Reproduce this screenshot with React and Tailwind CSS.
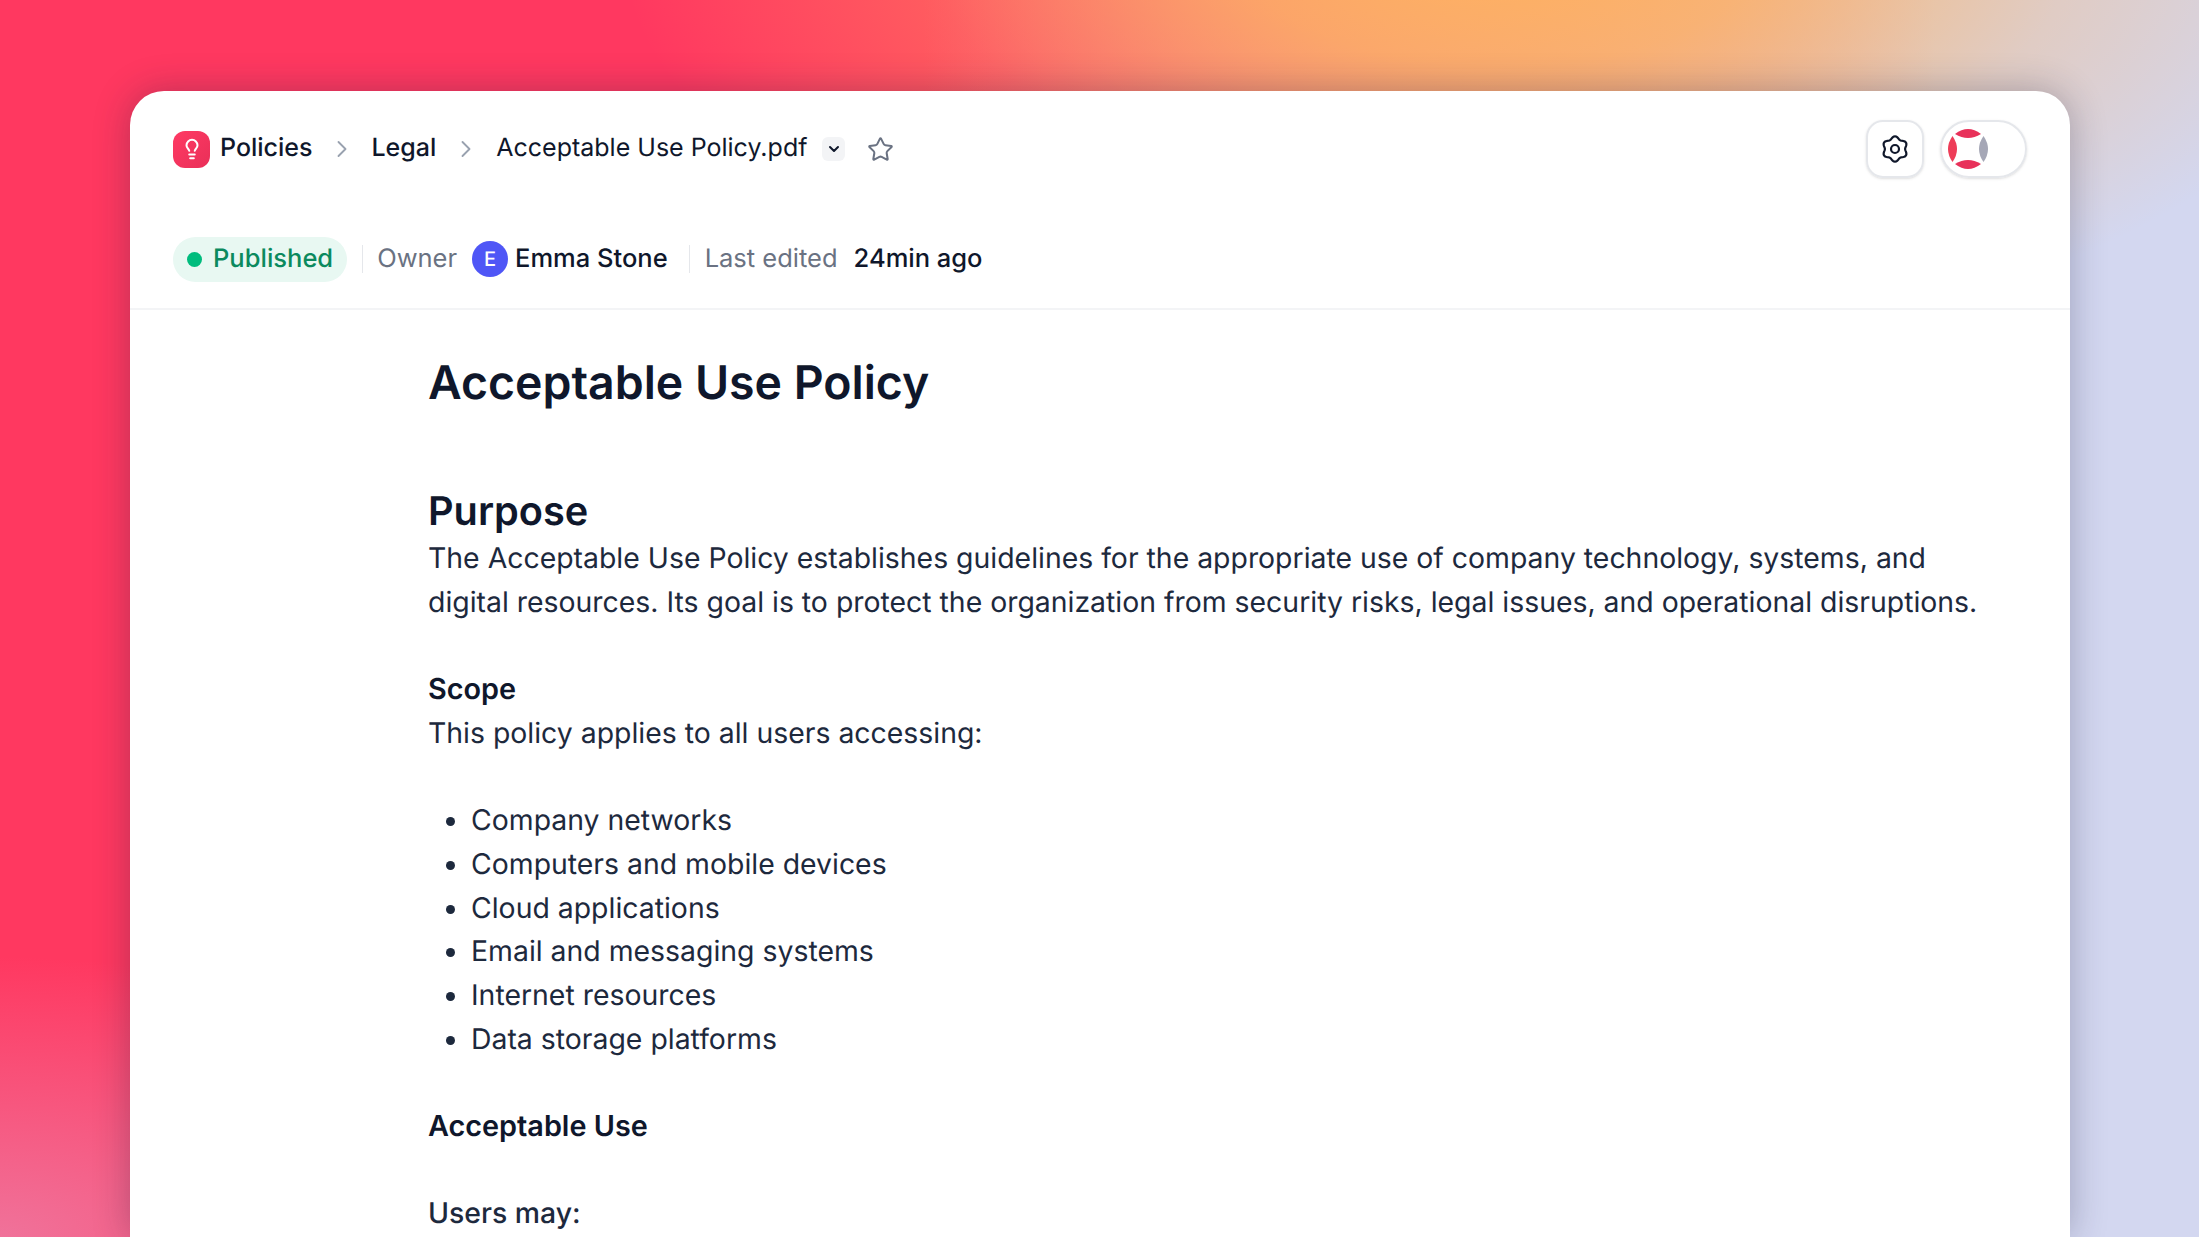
import React from 'react';
import { ChevronRight, ChevronDown, Star, Lightbulb } from 'lucide-react';

const bullets = [
  'Company networks',
  'Computers and mobile devices',
  'Cloud applications',
  'Email and messaging systems',
  'Internet resources',
  'Data storage platforms',
];

// six lobed outline of the settings cog
const gearPath = Array.from({ length: 72 }, (_, i) => {
  const a = (i / 72) * Math.PI * 2;
  const r = 11.4 + 1.3 * Math.cos(6 * a);
  const x = 15 + r * Math.sin(a);
  const y = 15 - r * Math.cos(a);
  return `${i === 0 ? 'M' : 'L'}${x.toFixed(2)} ${y.toFixed(2)}`;
}).join(' ') + 'Z';

const GearIcon = () => (
  <svg width="30" height="30" viewBox="0 0 30 30" fill="none" stroke="#0f172a" strokeWidth="2.2" strokeLinejoin="round">
    <path d={gearPath} />
    <circle cx="15" cy="15" r="4" />
  </svg>
);

const HelpIcon = () => (
  <svg width="40" height="40" viewBox="0 0 40 40">
    <path d="M7 5 Q20 -5 33 5 Q20 13 7 5Z" fill="#e8315a" />
    <path d="M7 35 Q20 45 33 35 Q20 27 7 35Z" fill="#e8315a" />
    <path d="M4.500 7 Q-4.500 20 4.500 33 Q13.500 20 4.500 7Z" fill="#ee3d58" />
    <path d="M35.500 7 Q44.500 20 35.500 33 Q26.500 20 35.500 7Z" fill="#a5a7b6" />
  </svg>
);

const Divider = () => <div className="w-px h-7 bg-gray-200" />;

export default function App() {
  return (
    <div className="h-screen overflow-hidden flex flex-col pt-[91px] pl-[130px] pr-[129px] font-['Inter',sans-serif] [text-rendering:geometricPrecision] bg-[radial-gradient(ellipse_800px_400px_at_0%_100%,#f0729a_0%,rgba(240,114,154,0)_70%),radial-gradient(ellipse_880px_420px_at_1500px_-60px,#ffb25e_0%,rgba(255,178,94,0.8)_30%,rgba(255,178,94,0.3)_65%,rgba(255,178,94,0)_100%),linear-gradient(90deg,#ff3860_0%,#ff3860_42%,#d3d7f0_88%,#d3d7f0_100%)]">
      <div className="flex-1 bg-white rounded-t-[34px] shadow-[0_0_36px_rgba(30,30,60,0.3)]">
        {/* Breadcrumb */}
        <div className="flex items-center justify-between pl-[43px] pr-[43px] h-[116px]">
          <div className="flex items-center text-[25px] text-slate-900">
            <div className="w-[37px] h-[37px] rounded-[12px] bg-gradient-to-br from-[#ff3a64] to-[#e92f58] flex items-center justify-center">
              <Lightbulb className="w-[22px] h-[22px] text-white" strokeWidth={2.200} />
            </div>
            <span className="ml-[10px] font-medium">Policies</span>
            <ChevronRight className="w-[28px] h-[28px] text-gray-400 mx-[15.500px]" strokeWidth={1.600} />
            <span className="font-medium">Legal</span>
            <ChevronRight className="w-[28px] h-[28px] text-gray-400 mx-[16px]" strokeWidth={1.600} />
            <span>Acceptable Use Policy.pdf</span>
            <div className="ml-[15px] w-[23px] h-[24px] rounded-md bg-gray-100 flex items-center justify-center">
              <ChevronDown className="w-[16px] h-[16px] text-slate-900" strokeWidth={3} />
            </div>
            <Star className="ml-[22px] w-[27px] h-[27px] text-gray-500" strokeWidth={1.800} />
          </div>
          <div className="flex items-center gap-[16px]">
            <div className="w-[58px] h-[58px] rounded-[17px] border-2 border-gray-200 shadow-sm flex items-center justify-center">
              <GearIcon />
            </div>
            <div className="w-[87px] h-[58px] rounded-full border-2 border-gray-200 shadow-sm flex items-center pl-[6px]">
              <HelpIcon />
            </div>
          </div>
        </div>

        {/* Status row */}
        <div className="flex items-center h-[103px] pl-[43px] pt-[3px] border-b-2 border-gray-100 text-[25.500px]">
          <div className="h-[45px] px-[14px] rounded-full bg-[#e8f8f2] flex items-center gap-[11px]">
            <div className="w-[15px] h-[15px] rounded-full bg-emerald-500" />
            <span className="font-medium text-[#0b8a5e]">Published</span>
          </div>
          <div className="ml-[15px] mr-[14px]"><Divider /></div>
          <span className="text-gray-500">Owner</span>
          <div className="ml-[15px] w-[36px] h-[36px] rounded-full bg-[#4f56f6] flex items-center justify-center text-white text-[20px] font-medium">E</div>
          <span className="ml-[7px] font-medium text-slate-900">Emma Stone</span>
          <div className="ml-[21px] mr-[15px]"><Divider /></div>
          <span className="text-gray-500">Last edited</span>
          <span className="ml-[16px] font-medium text-slate-900">24min ago</span>
        </div>

        {/* Document */}
        <div className="pl-[298px] pr-[60px] text-[28.400px] leading-[43.700px] text-slate-800">
          <h1 className="mt-[45px] text-[46.400px] leading-[56px] font-semibold text-slate-900">Acceptable Use Policy</h1>
          <h2 className="mt-[76px] text-[39.700px] leading-[49px] font-semibold text-slate-900">Purpose</h2>
          <p>The Acceptable Use Policy establishes guidelines for the appropriate use of company technology, systems, and digital resources. Its goal is to protect the organization from security risks, legal issues, and operational disruptions.</p>
          <h3 className="mt-[43.700px] text-[28.800px] font-semibold text-slate-900">Scope</h3>
          <p>This policy applies to all users accessing:</p>
          <ul className="mt-[43.700px] list-disc pl-[43px]">
            {bullets.map((item) => (
              <li key={item}>{item}</li>
            ))}
          </ul>
          <h3 className="mt-[43.700px] text-[28.800px] font-semibold text-slate-900">Acceptable Use</h3>
          <p className="mt-[43.700px] font-medium">Users may:</p>
        </div>
      </div>
    </div>
  );
}
